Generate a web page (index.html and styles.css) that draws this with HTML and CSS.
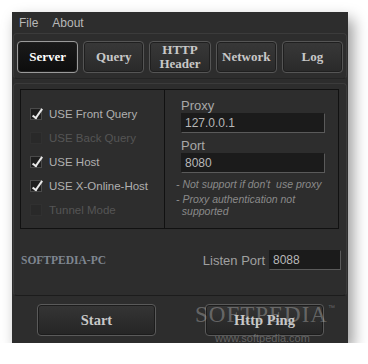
FILE: index.html
```html
<!DOCTYPE html>
<html lang="en">
<head>
    <meta charset="UTF-8">
    <title>Proxy Server</title>
    <link rel="stylesheet" href="styles.css">
</head>
<body>
    <div class="window">
        <div class="menu">
            <span>File</span>
            <span>About</span>
        </div>
        <div class="tabs">
            <button class="tab active">Server</button>
            <button class="tab">Query</button>
            <button class="tab">HTTP<br>Header</button>
            <button class="tab">Network</button>
            <button class="tab">Log</button>
        </div>
        <div class="content">
            <div class="box">
                <div class="options">
                    <label class="opt"><span class="check on"></span>USE Front Query</label>
                    <label class="opt off"><span class="check"></span>USE Back Query</label>
                    <label class="opt"><span class="check on"></span>USE Host</label>
                    <label class="opt"><span class="check on"></span>USE X-Online-Host</label>
                    <label class="opt off"><span class="check"></span>Tunnel Mode</label>
                </div>
                <div class="proxy">
                    <div class="field-label">Proxy</div>
                    <div class="field">127.0.0.1</div>
                    <div class="field-label">Port</div>
                    <div class="field">8080</div>
                    <div class="notes">
                        <div class="note">- Not support if don't&nbsp; use proxy</div>
                        <div class="note">- Proxy authentication not<br>&nbsp;&nbsp;supported</div>
                    </div>
                </div>
            </div>
            <div class="host-row">
                <div class="host">SOFTPEDIA-PC</div>
                <div class="listen">
                    <span class="listen-label">Listen Port</span>
                    <div class="field small">8088</div>
                </div>
            </div>
        </div>
        <div class="actions">
            <button class="action">Start</button>
            <button class="action">Http Ping</button>
        </div>
        <div class="watermark">
            <div class="wm-big">SOFTPEDIA<sup>™</sup></div>
            <div class="wm-small">www.softpedia.com</div>
        </div>
    </div>
</body>
</html>
```

FILE: styles.css
```css
body {
    margin: 0;
    background-color: #ffffff;
    font-family: "Liberation Sans", sans-serif;
}
.window {
    position: relative;
    margin: 12px 0 0 12px;
    width: 336px;
    height: 331px;
    background-color: #2d2d2d;
    box-shadow: 5px 7px 14px rgba(0, 0, 0, 0.4);
    box-sizing: border-box;
    padding: 0 1px;
}
.menu {
    height: 21px;
    display: flex;
    align-items: center;
    gap: 14px;
    padding-left: 6px;
    font-size: 12px;
    color: #b8b8b8;
}
.tabs {
    height: 46px;
    box-sizing: border-box;
    border: 1px solid #3b3b3b;
    border-bottom-color: #242424;
    border-radius: 4px;
    display: flex;
    gap: 5px;
    padding: 7px 3px 0 3px;
}
.tab {
    flex: 1;
    height: 32px;
    padding: 0;
    border: 1px solid #555555;
    border-radius: 4px;
    background: linear-gradient(#383838, #2a2a2a);
    box-shadow: inset 0 0 0 1px #1f1f1f;
    font-family: "Liberation Serif", serif;
    font-weight: bold;
    font-size: 13px;
    line-height: 14px;
    color: #c8c8c8;
}
.tab.active {
    background: linear-gradient(#1a1a1a, #0d0d0d);
    border-color: #9a9a9a;
    color: #ffffff;
}
.content {
    margin-top: 4px;
    height: 213px;
    box-sizing: border-box;
    border: 1px solid #3b3b3b;
    border-bottom-color: #1c1c1c;
    border-radius: 4px;
    padding: 5px 7px 0 6px;
}
.box {
    height: 140px;
    box-sizing: border-box;
    border: 1px solid #111111;
    display: flex;
}
.options {
    width: 144px;
    box-sizing: border-box;
    border-right: 1px solid #111111;
    padding: 16px 0 0 9px;
    display: flex;
    flex-direction: column;
    gap: 8px;
}
.opt {
    display: flex;
    align-items: center;
    height: 16px;
    font-size: 11.5px;
    color: #b0b0b0;
}
.opt.off {
    color: #555555;
}
.check {
    position: relative;
    width: 12px;
    height: 12px;
    margin-right: 7px;
    background-color: #292929;
    border: 1px solid #303030;
    box-sizing: border-box;
}
.check.on {
    background-color: #1e1e1e;
    border-color: #4a4a4a;
}
.check.on::after {
    content: "";
    position: absolute;
    left: 4px;
    top: -2px;
    width: 3px;
    height: 10px;
    border-right: 2px solid #e8e8e8;
    border-bottom: 2px solid #e8e8e8;
    transform: rotate(35deg);
}
.proxy {
    flex: 1;
    padding: 8px 0 0 16px;
}
.field-label {
    font-size: 13px;
    color: #a8a8a8;
    line-height: 15px;
    height: 15px;
}
.field {
    width: 144px;
    height: 20px;
    box-sizing: border-box;
    background-color: #1b1b1b;
    border: 1px solid #1b1b1b;
    border-right-color: #5a5a5a;
    border-bottom-color: #5a5a5a;
    padding: 1px 3px;
    font-size: 12px;
    line-height: 17px;
    color: #b8b8b8;
    margin-bottom: 5px;
}
.notes {
    margin: 5px 0 0 -5px;
}
.note {
    font-size: 10.5px;
    font-style: italic;
    line-height: 12px;
    color: #8a8a8a;
    margin-bottom: 3px;
}
.host-row {
    display: flex;
    justify-content: space-between;
    align-items: center;
    padding-top: 21px;
}
.host {
    font-family: "Liberation Serif", serif;
    font-weight: bold;
    font-size: 11.5px;
    color: #7f8690;
    margin-left: 1px;
}
.listen {
    display: flex;
    align-items: center;
    gap: 4px;
    margin-right: -2px;
}
.listen-label {
    font-size: 13px;
    color: #a0a0a0;
}
.field.small {
    width: 72px;
    margin: 0;
}
.actions {
    display: flex;
    padding: 8px 0 0 24px;
    gap: 49px;
}
.action {
    width: 119px;
    height: 32px;
    border: 1px solid #5a5a5a;
    border-radius: 4px;
    background: linear-gradient(#353535, #252525);
    box-shadow: inset 0 0 0 1px #1c1c1c;
    font-family: "Liberation Serif", serif;
    font-weight: bold;
    font-size: 14.5px;
    color: #c8c8c8;
}
.watermark {
    position: absolute;
    left: 183px;
    top: 284px;
    pointer-events: none;
    text-align: center;
}
.wm-big {
    font-family: "Liberation Serif", serif;
    font-size: 23px;
    letter-spacing: 1px;
    color: rgba(190, 190, 190, 0.4);
    line-height: 24px;
}
.wm-big sup {
    font-family: "Liberation Sans", sans-serif;
    font-size: 7px;
    vertical-align: 12px;
}
.wm-small {
    font-size: 11px;
    color: rgba(170, 170, 170, 0.45);
    margin-top: 5px;
    margin-left: -6px;
}
```
